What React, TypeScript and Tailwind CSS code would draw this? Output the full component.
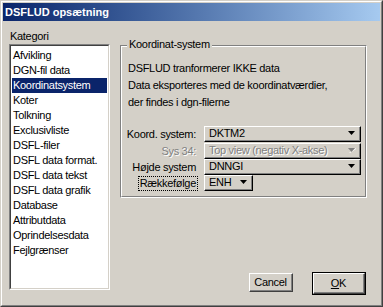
const items = [
  "Afvikling",
  "DGN-fil data",
  "Koordinatsystem",
  "Koter",
  "Tolkning",
  "Exclusivliste",
  "DSFL-filer",
  "DSFL data format.",
  "DSFL data tekst",
  "DSFL data grafik",
  "Database",
  "Attributdata",
  "Oprindelsesdata",
  "Fejlgrænser",
];

function Arrow({ disabled }: { disabled?: boolean }) {
  return (
    <svg width="9" height="5" viewBox="0 0 9 5" className="shrink-0">
      {disabled && <polygon points="2,5 9,0 9,1 3,5" fill="#ffffff" />}
      <polygon points="1,0 8,0 4.5,4" fill={disabled ? "#808080" : "#000000"} />
    </svg>
  );
}

function Combo({ value, width, disabled }: { value: string; width: string; disabled?: boolean }) {
  return (
    <div className={`${width} h-[16px] border-t border-l border-t-white border-l-white border-r border-b border-r-black border-b-black`}>
      <div className="h-full flex items-center justify-between pl-[4px] pr-[3px] border-r border-b border-r-[#808080] border-b-[#808080]">
        <span className={`whitespace-nowrap ${disabled ? "text-[#808080] [text-shadow:1px_1px_0_#ffffff]" : "text-black"}`}>{value}</span>
        <Arrow disabled={disabled} />
      </div>
    </div>
  );
}

function Button({ label, isDefault }: { label: React.ReactNode; isDefault?: boolean }) {
  return (
    <div className={isDefault ? "border border-black" : ""}>
      <div className="border-t border-l border-t-white border-l-white border-r border-b border-r-[#404040] border-b-[#404040]">
        <div
          className={`flex items-center justify-center border-r border-b border-r-[#808080] border-b-[#808080] ${
            isDefault ? "w-[50px] h-[19px]" : "w-[42px] h-[17px]"
          }`}
        >
          {label}
        </div>
      </div>
    </div>
  );
}

export default function App() {
  return (
    <div
      className="w-[383px] h-[307px] bg-[#d4d0c8] text-[11px] leading-none text-black border border-t-[#d4d0c8] border-l-[#d4d0c8] border-r-[#404040] border-b-[#404040]"
      style={{ fontFamily: '"Liberation Sans", Arial, sans-serif' }}
    >
      <div className="h-full border border-t-white border-l-white border-r-[#808080] border-b-[#808080] p-[1px] flex flex-col">
        <div className="h-[18px] shrink-0 flex items-center pl-[2px] bg-gradient-to-r from-[#0a246a] to-[#a6caf0] text-white font-bold">
          DSFLUD opsætning
        </div>

        <div className="flex flex-1 pl-[6px] tracking-[-0.3px]">
          <div className="flex flex-col pt-[10px]">
            <div className="h-[13px] pl-[1px]">Kategori</div>
            <div className="w-[101px] h-[246px] border border-t-[#808080] border-l-[#808080] border-r-white border-b-white">
              <div className="h-full bg-white border border-t-[#404040] border-l-[#404040] border-r-[#d4d0c8] border-b-[#d4d0c8] pt-[2px] pl-[1px] pr-[1px]">
                {items.map((it) => (
                  <div
                    key={it}
                    className={`h-[15px] flex items-center pl-[1px] whitespace-nowrap ${
                      it === "Koordinatsystem" ? "bg-[#0a246a] text-white" : ""
                    }`}
                  >
                    {it}
                  </div>
                ))}
              </div>
            </div>
          </div>

          <div className="flex flex-col flex-1 pl-[10px] pr-[14px]">
            <div className="relative mt-[24px] w-[247px] h-[153px] border border-t-[#808080] border-l-[#808080] border-r-white border-b-white">
              <div className="h-full border border-t-white border-l-white border-r-[#808080] border-b-[#808080] flex flex-col pl-[6px] pt-[15px]">
                <span className="absolute left-[6px] -top-[7px] px-[2px] bg-[#d4d0c8]">Koordinat-system</span>
                <div className="flex flex-col gap-[4px] leading-[13px]">
                  <div>DSFLUD tranformerer IKKE data</div>
                  <div>Data eksporteres med de koordinatværdier,</div>
                  <div>der findes i dgn-filerne</div>
                </div>
                <div className="flex flex-col mt-[17px]">
                  <div className="flex items-center">
                    <div className="w-[68px] flex justify-end whitespace-nowrap">Koord. system:</div>
                    <div className="ml-[8px]"><Combo value="DKTM2" width="w-[157px]" /></div>
                  </div>
                  <div className="flex items-center mt-[1px]">
                    <div className="w-[68px] flex justify-end whitespace-nowrap text-[#808080] [text-shadow:1px_1px_0_#ffffff]">Sys 34:</div>
                    <div className="ml-[8px]"><Combo value="Top view (negativ X-akse)" width="w-[157px]" disabled /></div>
                  </div>
                  <div className="flex items-center">
                    <div className="w-[68px] flex justify-end whitespace-nowrap">Højde system</div>
                    <div className="ml-[8px]"><Combo value="DNNGI" width="w-[157px]" /></div>
                  </div>
                  <div className="flex items-center">
                    <div className="w-[70px] flex justify-end whitespace-nowrap">
                      <span className="border border-dotted border-black px-[1px] py-[1px]">Rækkefølge</span>
                    </div>
                    <div className="ml-[6px]"><Combo value="ENH" width="w-[49px]" /></div>
                  </div>
                </div>
              </div>
            </div>

            <div className="mt-auto mb-[9px] flex justify-end gap-[19px] pr-[1px]">
              <div className="mt-[1px]"><Button label="Cancel" /></div>
              <Button isDefault label={<span><span className="underline">O</span>K</span>} />
            </div>
          </div>
        </div>
      </div>
    </div>
  );
}
